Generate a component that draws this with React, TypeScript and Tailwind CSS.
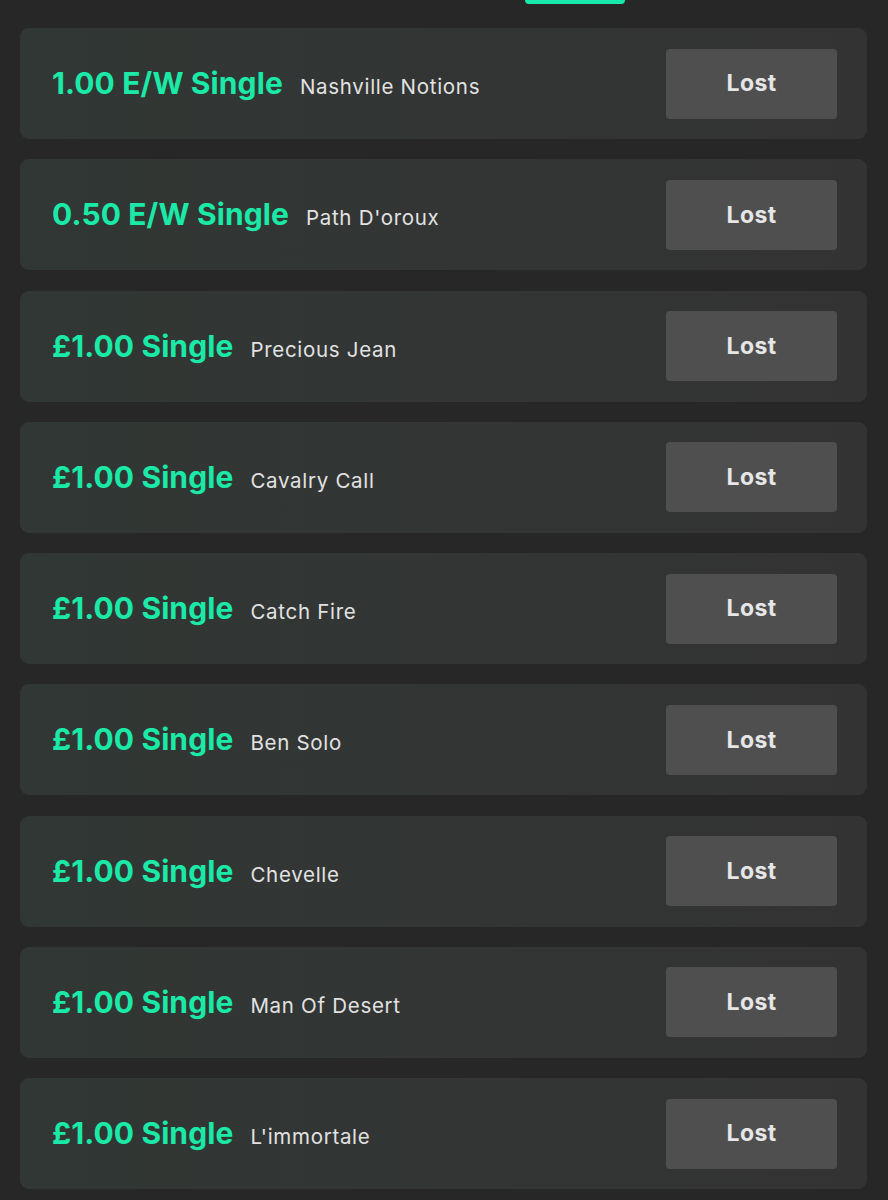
import React from "react";

const bets = [
  { stake: "1.00 E/W Single", name: "Nashville Notions" },
  { stake: "0.50 E/W Single", name: "Path D'oroux" },
  { stake: "£1.00 Single", name: "Precious Jean" },
  { stake: "£1.00 Single", name: "Cavalry Call" },
  { stake: "£1.00 Single", name: "Catch Fire" },
  { stake: "£1.00 Single", name: "Ben Solo" },
  { stake: "£1.00 Single", name: "Chevelle" },
  { stake: "£1.00 Single", name: "Man Of Desert" },
  { stake: "£1.00 Single", name: "L'immortale" },
];

export default function App() {
  return (
    <div
      className="w-[888px] h-[1200px] overflow-hidden bg-[#272727]"
      style={{ fontFamily: "Inter, 'Noto Sans', sans-serif" }}
    >
      <div className="h-[28px] flex">
        <div className="ml-[525px] w-[100px] h-[4px] rounded-b-[12px] bg-[#18e8a8]" />
      </div>
      <div className="flex flex-col gap-[20.25px] px-[20px] pr-[21px]">
        {bets.map((b, i) => (
          <div
            key={i}
            className="h-[111px] rounded-[9px] bg-gradient-to-r from-[#313734] to-[#333333] flex items-center justify-between pl-[32px] pr-[30px]"
          >
            <div className="flex items-baseline gap-[17px]">
              <span className="text-[30px] font-bold text-[#1be9a7] tracking-[0.1px]">
                {b.stake}
              </span>
              <span className="text-[20.5px] text-[#e2e2e2] tracking-[0.7px]">
                {b.name}
              </span>
            </div>
            <div className="w-[171px] h-[70px] rounded-[4px] bg-[#4f4f4f] flex items-center justify-center">
              <span className="text-[23px] font-bold text-[#e6e6e6] tracking-[0.4px]">Lost</span>
            </div>
          </div>
        ))}
      </div>
    </div>
  );
}
